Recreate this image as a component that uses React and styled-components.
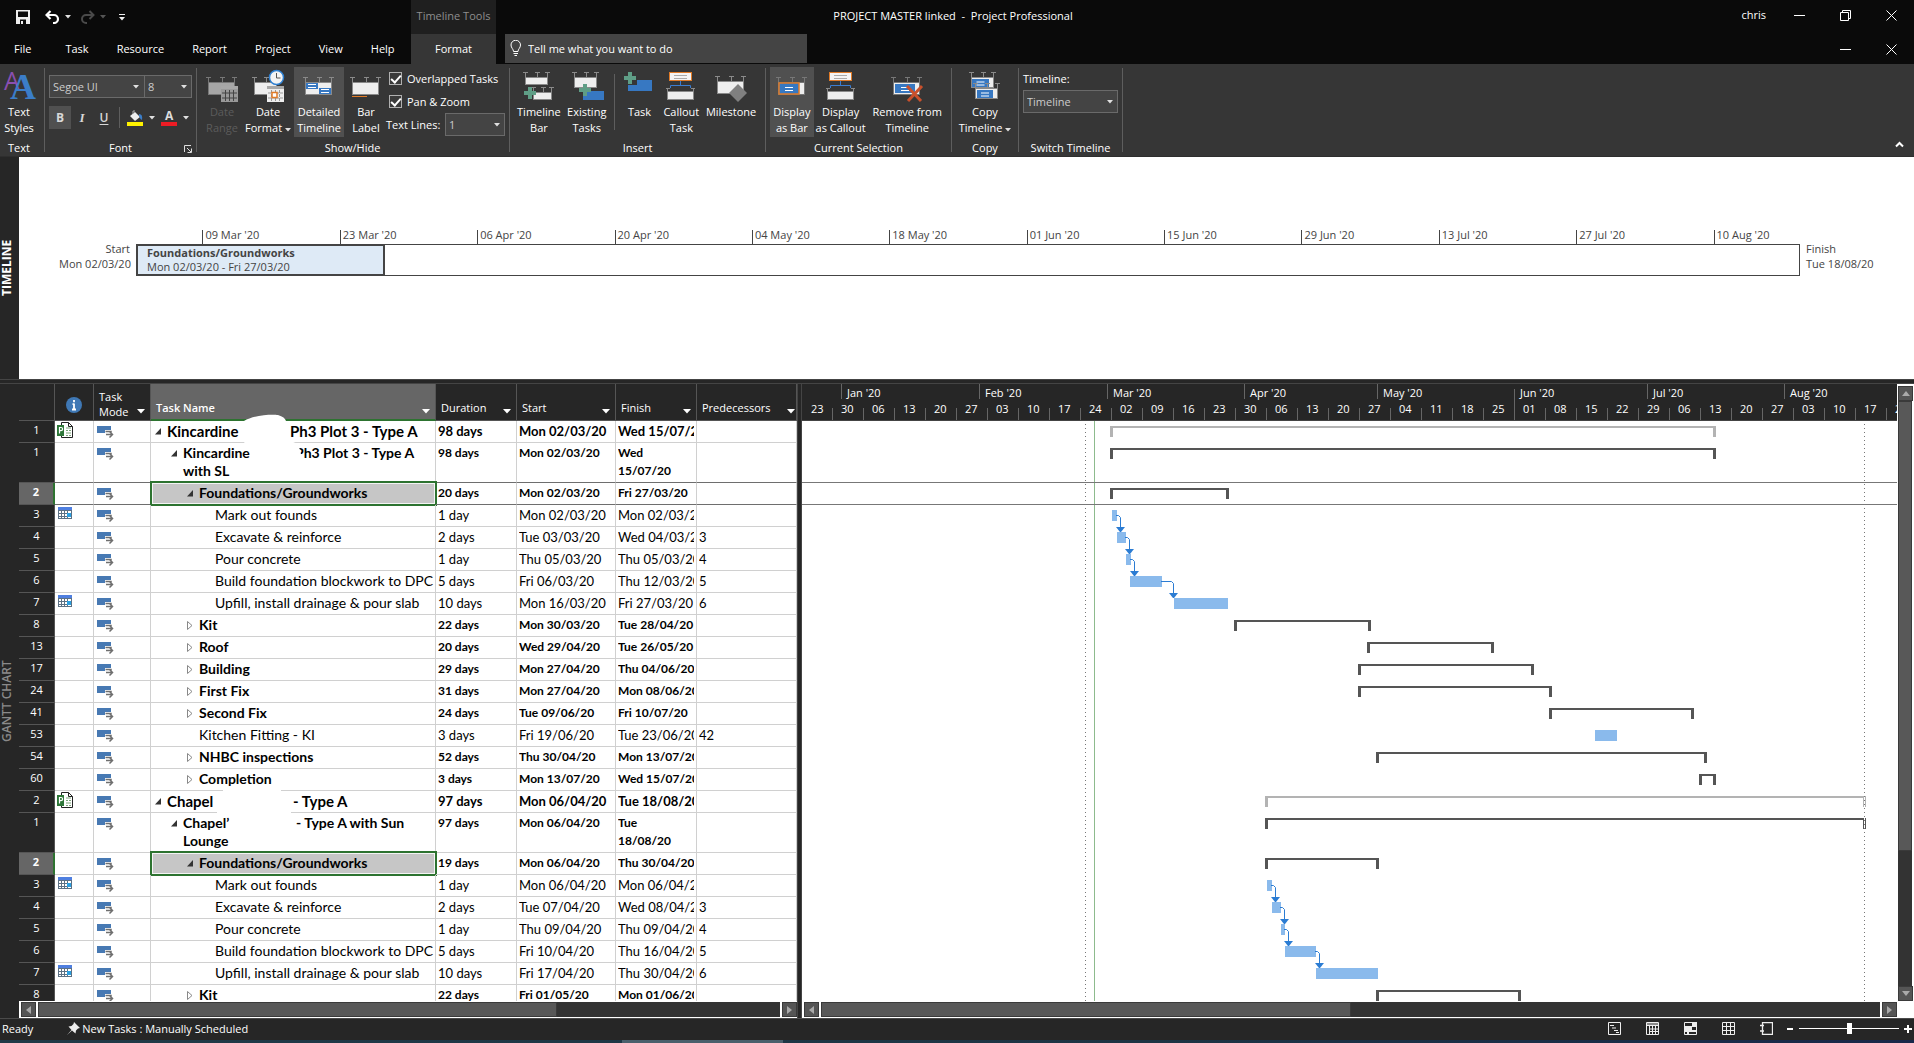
import React from 'react';
import styled, { createGlobalStyle } from 'styled-components';

const ui = `"Open Sans", "Noto Sans", sans-serif`;
const gridFont = `Lato, "Open Sans", sans-serif`;

const Global = createGlobalStyle`
  * { box-sizing: border-box; }
  body { margin: 0; background: #262626; font: 11px/16px ${ui}; color: #fff; }
  button, input, select { font: inherit; color: inherit; margin: 0; }
  button { background: none; border: 0; padding: 0; }
`;

const Window = styled.div`
  height: 100vh;
  display: flex;
  flex-direction: column;
  overflow: hidden;
  white-space: nowrap;
`;

/* ---------- title bar ---------- */
const TopBar = styled.header`
  display: flex;
  height: 34px;
  flex: none;
  background: #0a0a0a;
`;
const QuickAccess = styled.div`
  width: 411px;
  padding-left: 16px;
  display: flex;
  align-items: center;
`;
const QuickButton = styled.button`
  height: 20px;
  display: flex;
  align-items: center;
  justify-content: flex-start;
  width: ${(p) => p.$w}px;
`;
const ToolsCaption = styled.div`
  width: 85px;
  padding-top: 8px;
  text-align: center;
  background: #1f1f1f;
  color: #8e8e8e;
`;
const DocTitle = styled.div`
  flex: 1;
  text-align: center;
  line-height: 32px;
  white-space: pre;
`;
const WindowControls = styled.div`
  width: 504px;
  display: flex;
  justify-content: flex-end;
  align-items: center;
  height: 30px;
`;
const User = styled.span`
  padding-right: 10px;
`;
const ControlButton = styled.button`
  width: 46px;
  height: 30px;
  display: grid;
  place-items: center;
`;

const Tabs = styled.nav`
  display: flex;
  height: 30px;
  flex: none;
  background: #0a0a0a;
`;
const TabList = styled.div`
  width: 411px;
  display: flex;
  align-items: center;
`;
const Tab = styled.button`
  height: 30px;
  padding: 0 ${(p) => p.$end || 14}px 0 14px;
`;
const ActiveTab = styled.button`
  width: 85px;
  background: #363636;
`;
const TellMe = styled.label`
  display: flex;
  align-items: center;
  gap: 6px;
  width: 302px;
  height: 29px;
  margin-left: 9px;
  padding-left: 5px;
  background: #444;
  input {
    flex: 1;
    border: 0;
    padding: 0;
    background: none;
    outline: none;
    &::placeholder { color: #fff; opacity: 1; }
  }
`;
const TabControls = styled.div`
  margin-left: auto;
  display: flex;
`;

/* ---------- ribbon ---------- */
const Ribbon = styled.section`
  display: flex;
  height: 93px;
  flex: none;
  background: #363636;
  border-bottom: 1px solid #2e2e2e;
`;
const Group = styled.div`
  display: flex;
  flex-direction: column;
  width: ${(p) => p.$w}px;
  height: 84px;
  margin-top: 4px;
  padding: 0 ${(p) => p.$end ?? 4}px 0 ${(p) => p.$start ?? 4}px;
  border-right: 1px solid #5e5e5e;
`;
const GroupBody = styled.div`
  display: flex;
  flex: none;
  height: 72px;
`;
const GroupLabel = styled.div`
  display: flex;
  flex: none;
  justify-content: center;
  position: relative;
  line-height: 16px;
  svg { position: absolute; right: 0; top: 5px; }
`;
const BigButton = styled.button`
  display: flex;
  flex-direction: column;
  align-items: center;
  width: ${(p) => p.$w}px;
  height: 70px;
  margin: -1px ${(p) => p.$gap || 0}px 0;
  padding-top: 3px;
  background: ${(p) => (p.$on ? '#505050' : 'none')};
  color: ${(p) => (p.$off ? '#5c5c5c' : '#fff')};
  svg.icon { flex: none; overflow: visible; margin-bottom: 2px; }
`;
const VLine = styled.i`
  width: 1px;
  height: ${(p) => p.$h}px;
  margin: ${(p) => p.$m};
  background: #5e5e5e;
`;
const Stack = styled.div`
  display: flex;
  flex-direction: column;
  padding-top: ${(p) => p.$top || 0}px;
`;
const Checks = styled(Stack)`
  margin-top: -1px;
`;
const SelectRow = styled.div`
  display: flex;
`;
const SelectBox = styled.span`
  position: relative;
  display: flex;
  svg { position: absolute; right: 5px; top: 10px; pointer-events: none; }
`;
const Select = styled.select`
  appearance: none;
  width: ${(p) => p.$w}px;
  height: 23px;
  margin-right: ${(p) => (p.$join ? -1 : 0)}px;
  padding: 0 3px;
  border: 1px solid #6a6a6a;
  border-radius: 0;
  background: #444;
  color: #ccc;
`;
const FormatRow = styled.div`
  display: flex;
  align-items: center;
  height: 23px;
  margin-top: 8px;
`;
const FormatButton = styled.button`
  width: 22px;
  height: 23px;
  display: grid;
  place-items: center;
  background: ${(p) => (p.$on ? '#505050' : 'none')};
  color: #d8d8d8;
  font-size: 12px;
  &.bold { font-weight: 700; }
  &.italic { font: italic 700 13px "Liberation Serif", serif; }
  &.under { font-weight: 600; text-decoration: underline; text-underline-offset: 2px; }
`;
const ColorButton = styled.button`
  display: flex;
  align-items: center;
  gap: 5px;
  width: 34px;
`;
const Check = styled.label`
  display: flex;
  align-items: center;
  gap: 5px;
  height: 23px;
  padding-left: 3px;
  input {
    appearance: none;
    width: 13px;
    height: 13px;
    border: 1px solid #b0b0b0;
    background: #3a3a3a;
    display: grid;
    place-items: center;
  }
  input:checked::after {
    content: '';
    width: 4px;
    height: 8px;
    margin-top: -2px;
    border: solid #fff;
    border-width: 0 2px 2px 0;
    transform: rotate(42deg);
  }
`;
const FieldLabel = styled.label`
  display: flex;
  align-items: center;
  justify-content: space-between;
  gap: 4px;
  width: 119px;
`;
const Collapse = styled.button`
  margin: auto 10px 4px auto;
`;

/* ---------- timeline pane ---------- */
const Pane = styled.section`
  display: flex;
  height: 222px;
  flex: none;
  background: #fff;
  color: #444;
`;
const SideLabel = styled.h2`
  width: 19px;
  flex: none;
  margin: 0;
  padding-left: 5px;
  display: grid;
  place-items: center;
  writing-mode: vertical-rl;
  transform: rotate(180deg);
  background: #262626;
  color: ${(p) => (p.$dim ? '#8a8a8a' : '#fff')};
  font-size: 12px;
  font-weight: ${(p) => (p.$dim ? 600 : 700)};
  line-height: 14px;
`;
const TimelineRow = styled.div`
  flex: 1;
  display: flex;
  align-items: flex-start;
  padding: 87px 37px 0 40px;
`;
const Edge = styled.div`
  width: 71px;
  margin-top: -3px;
  line-height: 15px;
  text-align: ${(p) => p.$align};
`;
const Track = styled.div`
  flex: 1;
  position: relative;
  height: 32px;
  margin: 0 6px;
  border: 1px solid #444;
`;
const Mark = styled.span`
  position: absolute;
  bottom: 31px;
  height: 14px;
  padding-left: 2px;
  border-left: 1px solid #444;
  line-height: 10px;
`;
const TrackTask = styled.div`
  position: absolute;
  left: -1px;
  top: -1px;
  height: 32px;
  padding: 0 9px;
  border: 2px solid #444;
  background: #deeaf6;
  line-height: 14px;
  b { font-weight: 700; }
`;

/* ---------- gantt pane ---------- */
const Splitter = styled.div`
  height: 5px;
  flex: none;
  background: #262626;
  border: solid #444;
  border-width: 1px 0;
`;
const Gantt = styled.main`
  flex: 1;
  min-height: 0;
  display: flex;
`;
const Sheet = styled.div`
  width: 778px;
  flex: none;
  display: flex;
  flex-direction: column;
  background: #fff;
`;
const Scroller = styled.div`
  flex: 1;
  min-height: 0;
  overflow: hidden;
`;
const Table = styled.table`
  width: 778px;
  table-layout: fixed;
  border-collapse: separate;
  border-spacing: 0;
  font: 13px/18px ${gridFont};
  color: #000;
`;
const HeadCell = styled.th`
  height: 37px;
  padding: 0 5px 1px;
  vertical-align: bottom;
  text-align: left;
  background: ${(p) => (p.$on ? '#666' : '#262626')};
  border-right: 1px solid #555;
  border-bottom: ${(p) => (p.$on ? '2px solid #2d7330' : '1px solid #555')};
  color: #fff;
  font: ${(p) => (p.$on ? 600 : 400)} 11px/15px ${ui};
  &:last-child { padding-right: 1px; }
`;
const HeadInner = styled.div`
  display: flex;
  align-items: flex-end;
  justify-content: ${(p) => (p.$center ? 'center' : 'space-between')};
  padding-bottom: ${(p) => p.$up || 0}px;
  button { height: 9px; margin-bottom: ${(p) => (p.$up ? -1 : 3)}px; }
  button svg { display: block; }
`;
const Cell = styled.td`
  position: relative;
  height: 22px;
  padding: 1px 2px 2px;
  vertical-align: top;
  border-right: 1px solid #d0d0d0;
  border-bottom: 1px solid ${(p) => (p.$line ? '#6e6e6e' : '#d0d0d0')};
`;
const Clip = styled.div`
  overflow: hidden;
  font-weight: ${(p) => (p.$bold ? 700 : 400)};
  font-size: ${(p) => (p.$bold && !p.$big ? 12 : 13)}px;
`;
const NumCell = styled.th`
  padding: 0 0 1px;
  vertical-align: top;
  text-align: center;
  font: ${(p) => (p.$on ? 700 : 400)} 11px/18px ${ui};
  color: #fff;
  background: ${(p) => (p.$on ? '#666' : '#262626')};
  border-right: ${(p) => (p.$on ? '2px solid #2d7330' : '1px solid #555')};
  border-bottom: 1px solid #555;
`;
const IconCell = styled(Cell)`
  padding: ${(p) => p.$pad};
  line-height: 0;
`;
const NameText = styled.div`
  position: relative;
  z-index: 1;
  display: flex;
  align-items: flex-start;
  padding-left: ${(p) => p.$level * 16 + 2}px;
  font-weight: ${(p) => (p.$bold ? 700 : 400)};
  font-size: ${(p) => (p.$big ? 15 : 14)}px;
  svg { flex: none; width: 12px; height: 18px; }
`;
const Second = styled.span`
  position: absolute;
  left: ${(p) => p.$left}px;
`;
const Selection = styled.div`
  position: absolute;
  inset: -2px -2px -2px -1px;
  border: 2px solid #2d7330;
  background: #c6c6c6;
  box-shadow: inset 0 0 0 1px #f4f4f4;
`;
const Blob = styled.svg`
  position: absolute;
  left: 66px;
  top: -7px;
  z-index: 2;
  overflow: visible;
`;
const PaneSplit = styled.div`
  width: 5px;
  flex: none;
  background: #262626;
  border: solid #444;
  border-width: 0 1px;
`;
const ChartPane = styled.div`
  flex: 1;
  min-width: 0;
  display: flex;
  background: #fff;
`;
const ChartColumn = styled.div`
  flex: 1;
  min-width: 0;
  display: flex;
  flex-direction: column;
`;
const Scale = styled.svg`
  display: block;
  width: 100%;
  height: 37px;
  flex: none;
  background: #262626;
  font: 11px ${ui};
`;
const Plot = styled.svg`
  display: block;
  width: 100%;
  height: 604px;
`;

/* ---------- scroll bars ---------- */
const HBar = styled.div`
  display: flex;
  height: 17px;
  flex: none;
  gap: 2px;
  padding: 1px 0 1px 2px;
  background: #fff;
`;
const VBar = styled.div`
  display: flex;
  flex-direction: column;
  width: 17px;
  flex: none;
  padding: 2px 2px 17px 1px;
`;
const Rail = styled.div`
  display: flex;
  flex: 1;
  flex-direction: ${(p) => (p.$vertical ? 'column' : 'row')};
  background: #333;
`;
const Arrow = styled.button`
  width: 15px;
  height: 15px;
  flex: none;
  display: grid;
  place-items: center;
  background: #555;
  border: 1px solid #3a3a3a;
`;
const Thumb = styled.div`
  flex: 0 0 ${(p) => p.$size};
  background: #585858;
  border: 1px solid #3a3a3a;
`;

/* ---------- status bar ---------- */
const Status = styled.footer`
  display: flex;
  align-items: center;
  height: 22px;
  flex: none;
  padding: 0 1px 2px 2px;
  border-top: 1px solid #4a4a4a;
`;
const NewTasks = styled.button`
  display: flex;
  align-items: center;
  gap: 2px;
  margin-left: 34px;
`;
const Views = styled.div`
  display: flex;
  margin-left: auto;
`;
const ViewButton = styled.button`
  width: 38px;
  height: 20px;
  display: grid;
  place-items: center;
`;
const Zoom = styled.input`
  appearance: none;
  width: 100px;
  height: 14px;
  margin: 0 4px;
  background: linear-gradient(#fff, #fff) center / 100% 1px no-repeat;
  &::-webkit-slider-thumb {
    appearance: none;
    width: 5px;
    height: 11px;
    background: #fff;
  }
`;
const ZoomButton = styled.button`
  width: 10px;
  height: 14px;
  display: grid;
  place-items: center;
`;
const Desktop = styled.div`
  height: 3px;
  flex: none;
  background: linear-gradient(90deg, #203a48, #1c3444 60%, #18284a);
  i { display: block; width: 161px; height: 3px; margin-left: 622px; background: #4a5f6c; }
`;

/* ---------- glyphs ---------- */
const Caret = ({ dim }) => (
  <svg width="6" height="4" viewBox="0 0 6 4"><path d="M0 0h6L3 3.5z" fill={dim ? '#555' : '#e0e0e0'} /></svg>
);
const SortArrow = () => (
  <svg width="8" height="5" viewBox="0 0 8 5"><path d="M0 0h8L4 4.5z" fill="#fff" /></svg>
);
const Prongs = ({ x, y, w, h = 6, c = '#8a8a8a' }) => (
  <path
    fill="none"
    stroke={c}
    shapeRendering="crispEdges"
    d={`M${x} ${y + 0.5}h5M${x + Math.round(w / 2) - 2} ${y + 0.5}h5M${x + w - 5} ${y + 0.5}h5M${x + 2.5} ${y}v${h}M${x + Math.round(w / 2) + 0.5} ${y}v${h}M${x + w - 2.5} ${y}v${h}`}
  />
);
const Frame = ({ x = 0, y = 7, w = 31, h = 12, fill = '#eee', c = '#8a8a8a' }) => (
  <g>
    <Prongs x={x} y={y} w={w} c={c} />
    <rect x={x + 2.5} y={y + 5.5} width={w - 5} height={h} fill={fill} stroke={c} />
  </g>
);
const Plus = ({ x, y }) => <path d={`M${x + 4} ${y}h4v4h4v4h-4v4h-4v-4h-4v-4h4z`} fill="#5f9e86" />;
const BlueCard = ({ x, y, w, h, stroke = 'none' }) => (
  <g>
    <rect x={x} y={y} width={w} height={h} fill="#3778c2" stroke={stroke} strokeWidth="1.5" />
    <path d={`M${x + w / 2 - 4} ${y + h / 2 - 1}h8M${x + w / 2 - 4} ${y + h / 2 + 2}h8`} stroke="#fff" />
  </g>
);
const Cal = ({ x, y, fill, line, dot }) => (
  <g>
    <rect x={x} y={y} width="17" height="16" fill={fill} />
    <path d={`M${x} ${y + 1.5}h17`} stroke="#a8a8a8" strokeWidth="3" />
    <path d={`M${x + 1} ${y + 7}h15M${x + 1} ${y + 12}h15M${x + 4.5} ${y + 4}v11M${x + 8.5} ${y + 4}v11M${x + 12.5} ${y + 4}v11`} stroke={line} strokeDasharray={dot ? '3 1' : undefined} />
    {dot && <rect x={x + 5} y={y + 6.5} width="5" height="5" fill="#fff" stroke="#e07b28" strokeWidth="1.5" />}
  </g>
);
const Callout = () => (
  <g>
    <rect x="4.500" y="2.500" width="22" height="8" fill="#f4f4f4" stroke="#e07b28" />
    <path d="M9 5.500h13M9 8.500h13" stroke="#aaa" />
    <path d="M15.500 11v4M5.500 18v-2.500h20v2.500" fill="none" stroke="#3b7dd0" />
    <path d="M2.500 18v4M28.500 18v4M1 18.500h4M26 18.500h4" stroke="#8a8a8a" />
    <rect x="2.500" y="21.500" width="26" height="8" fill="#eee" stroke="#8a8a8a" />
  </g>
);

const icons = {
  styles: (
    <g>
      <text x="1" y="20" fontFamily="Open Sans, sans-serif" fontSize="25" fill="#8a4fb0">A</text>
      <text x="7" y="29" fontFamily="Liberation Serif, serif" fontWeight="700" fontSize="36" fill="#3b7dc8">A</text>
    </g>
  ),
  range: (<g><Frame fill="#a6a6a6" c="#777" /><Cal x={15} y={16} fill="#999" line="#444" /></g>),
  format: (
    <g>
      <Frame w={27} />
      <circle cx="24.500" cy="7.500" r="7" fill="#f4f4f4" stroke="#2f80d2" strokeWidth="1.500" />
      <path d="M24.500 3v5h4" fill="none" stroke="#555" />
      <Cal x={15} y={16} fill="#eee" line="#999" dot />
    </g>
  ),
  detailed: (
    <g>
      <Frame />
      <rect x="3" y="13" width="12" height="6" fill="#3778c2" /><path d="M5 14.500h8M5 17.500h8" stroke="#fff" />
      <rect x="16" y="18" width="12" height="6" fill="#3778c2" /><path d="M18 19.500h8M18 22.500h8" stroke="#fff" />
    </g>
  ),
  label: (<g><Frame /><path d="M2 26.500h15" stroke="#e07b28" /></g>),
  tbar: (<g><Frame x={0} y={2} w={27} h={7} /><Frame x={8} y={17} w={23} h={7} /><Plus x={1} y={17} /></g>),
  existing: (<g><Frame x={1} y={2} w={27} h={10} /><rect x="12" y="21" width="21" height="9" fill="#3778c2" /><Plus x={8} y={14} /></g>),
  task: (<g><rect x="4" y="10" width="24" height="11" fill="#3778c2" /><path d="M3 9h10v6H3z" fill="#363636" /><Plus x={0} y={2} /></g>),
  callout: <Callout />,
  milestone: (<g><Frame y={6} /><path d="M23 14l9 9-9 9-9-9z" fill="#808080" /></g>),
  asBar: (<g><Frame c="#777" /><BlueCard x={3} y={13} w={20} h={11} stroke="#e07b28" /></g>),
  remove: (
    <g><Frame c="#777" /><BlueCard x={4} y={14} w={20} h={9} /><path d="M16 16l14 15M31 16L17 31" stroke="#c8502c" strokeWidth="3" /></g>
  ),
  copy: (
    <g>
      <Frame y={2} w={27} h={10} /><BlueCard x={3} y={9} w={17} h={8} />
      <Frame x={4} y={13} w={27} h={10} /><BlueCard x={8} y={20} w={16} h={8} />
    </g>
  ),
};

const Big = ({ icon, a, b, w, on, off, gap, menu }) => (
  <BigButton $w={w} $on={on} $off={off} $gap={gap} disabled={off}>
    <svg className="icon" width="32" height="32" viewBox="0 0 32 32">{icons[icon]}</svg>
    <span>{a}</span>
    <span>{b}{menu && <> <Caret /></>}</span>
  </BigButton>
);

const Choice = ({ w, value, label, join, id }) => (
  <SelectBox>
    <Select id={id} $w={w} $join={join} aria-label={label} defaultValue={value}>
      <option>{value}</option>
    </Select>
    <Caret />
  </SelectBox>
);

const Minimize = () => <svg width="11" height="11"><path d="M0 5.500h11" stroke="#fff" /></svg>;
const Close = () => <svg width="11" height="11"><path d="M.5.500l10 10M10.500.500l-10 10" stroke="#fff" /></svg>;

/* ---------- data ---------- */
const K = 'sum';
const rows = [
  { n: 1, lv: 0, kind: 'project', name: 'Kincardine', rest: 'Ph3 Plot 3 - Type A', at: 139, dur: '98 days', s: 'Mon 02/03/20', f: 'Wed 15/07/20', icon: 'project', open: true, blob: 1 },
  { n: 1, lv: 1, kind: K, name: 'Kincardine', rest: 'Ph3 Plot 3 - Type A', at: 144, line2: 'with SL', dur: '98 days', s: 'Mon 02/03/20', f: 'Wed 15/07/20', open: true, line: true },
  { n: 2, lv: 2, kind: K, name: 'Foundations/Groundworks', dur: '20 days', s: 'Mon 02/03/20', f: 'Fri 27/03/20', open: true, sel: true, line: true },
  { n: 3, lv: 3, name: 'Mark out founds', dur: '1 day', s: 'Mon 02/03/20', f: 'Mon 02/03/20', icon: 'cal' },
  { n: 4, lv: 3, name: 'Excavate & reinforce', dur: '2 days', s: 'Tue 03/03/20', f: 'Wed 04/03/20', p: '3' },
  { n: 5, lv: 3, name: 'Pour concrete', dur: '1 day', s: 'Thu 05/03/20', f: 'Thu 05/03/20', p: '4' },
  { n: 6, lv: 3, name: 'Build foundation blockwork to DPC', dur: '5 days', s: 'Fri 06/03/20', f: 'Thu 12/03/20', p: '5' },
  { n: 7, lv: 3, name: 'Upfill, install drainage & pour slab', dur: '10 days', s: 'Mon 16/03/20', f: 'Fri 27/03/20', p: '6', icon: 'cal' },
  { n: 8, lv: 2, kind: K, name: 'Kit', dur: '22 days', s: 'Mon 30/03/20', f: 'Tue 28/04/20' },
  { n: 13, lv: 2, kind: K, name: 'Roof', dur: '20 days', s: 'Wed 29/04/20', f: 'Tue 26/05/20' },
  { n: 17, lv: 2, kind: K, name: 'Building', dur: '29 days', s: 'Mon 27/04/20', f: 'Thu 04/06/20' },
  { n: 24, lv: 2, kind: K, name: 'First Fix', dur: '31 days', s: 'Mon 27/04/20', f: 'Mon 08/06/20' },
  { n: 41, lv: 2, kind: K, name: 'Second Fix', dur: '24 days', s: 'Tue 09/06/20', f: 'Fri 10/07/20' },
  { n: 53, lv: 2, name: 'Kitchen Fitting - KI', dur: '3 days', s: 'Fri 19/06/20', f: 'Tue 23/06/20', p: '42', free: true },
  { n: 54, lv: 2, kind: K, name: 'NHBC inspections', dur: '52 days', s: 'Thu 30/04/20', from: '01/05/20', f: 'Mon 13/07/20' },
  { n: 60, lv: 2, kind: K, name: 'Completion', dur: '3 days', s: 'Mon 13/07/20', f: 'Wed 15/07/20' },
  { n: 2, lv: 0, kind: 'project', name: 'Chapel', rest: '- Type A', at: 142, dur: '97 days', s: 'Mon 06/04/20', f: 'Tue 18/08/20', icon: 'project', open: true, blob: 2 },
  { n: 1, lv: 1, kind: K, name: 'Chapel’', rest: '- Type A with Sun', at: 145, line2: 'Lounge', dur: '97 days', s: 'Mon 06/04/20', f: 'Tue 18/08/20', open: true },
  { n: 2, lv: 2, kind: K, name: 'Foundations/Groundworks', dur: '19 days', s: 'Mon 06/04/20', f: 'Thu 30/04/20', open: true, sel: true },
  { n: 3, lv: 3, name: 'Mark out founds', dur: '1 day', s: 'Mon 06/04/20', f: 'Mon 06/04/20', icon: 'cal' },
  { n: 4, lv: 3, name: 'Excavate & reinforce', dur: '2 days', s: 'Tue 07/04/20', f: 'Wed 08/04/20', p: '3' },
  { n: 5, lv: 3, name: 'Pour concrete', dur: '1 day', s: 'Thu 09/04/20', f: 'Thu 09/04/20', p: '4' },
  { n: 6, lv: 3, name: 'Build foundation blockwork to DPC', dur: '5 days', s: 'Fri 10/04/20', f: 'Thu 16/04/20', p: '5' },
  { n: 7, lv: 3, name: 'Upfill, install drainage & pour slab', dur: '10 days', s: 'Fri 17/04/20', f: 'Thu 30/04/20', p: '6', icon: 'cal' },
  { n: 8, lv: 2, kind: K, name: 'Kit', dur: '22 days', s: 'Fri 01/05/20', f: 'Mon 01/06/20' },
];
let nextTop = 0;
rows.forEach((r) => {
  r.h = r.line2 ? 40 : 22;
  r.top = nextTop;
  nextTop += r.h;
});

const DAY = 86400000;
const ORIGIN = Date.UTC(2019, 11, 23);
const PX = 4.426;
const dayOf = (text) => {
  const [d, m, y] = text.split(' ').pop().split('/').map(Number);
  return (Date.UTC(2000 + y, m - 1, d) - ORIGIN) / DAY;
};
const startX = (text) => Math.floor(1.1 + dayOf(text) * PX);
const endX = (text) => Math.round(1 + (dayOf(text) + 1) * PX);
const tickOf = (day) => Math.round(day * PX - 0.5);
const months = ['Jan', 'Feb', 'Mar', 'Apr', 'May', 'Jun', 'Jul', 'Aug'].map((name, m) => ({
  name: `${name} '20`,
  day: (Date.UTC(2020, m, 1) - ORIGIN) / DAY,
}));
const weeks = Array.from({ length: 36 }, (_, i) => ({
  day: i * 7,
  text: String(new Date(ORIGIN + i * 7 * DAY).getUTCDate()).padStart(2, '0'),
}));

const marks = ['09 Mar', '23 Mar', '06 Apr', '20 Apr', '04 May', '18 May', '01 Jun', '15 Jun', '29 Jun', '13 Jul', '27 Jul', '10 Aug'];
const SPAN = 169.375;

const ModeIcon = () => (
  <svg width="17" height="13" viewBox="0 0 17 13">
    <path d="M0 0h14v4H8v3H0z" fill="#4779b3" />
    <path d="M8.500 5.500H14v2M9 8.500h6M12.500 5.500l3 3-3 3" fill="none" stroke="#6f6f6f" strokeWidth="1.500" />
  </svg>
);
const ProjectIcon = () => (
  <svg width="17" height="17" viewBox="0 0 17 17">
    <path d="M4.500.500h7l4 4v11h-11z" fill="#fff" stroke="#222" />
    <path d="M11.500.500v4h4" fill="none" stroke="#222" />
    <path d="M9 6h5M9 8.500h2M12 8.500h2M9 11h5M9 13.500h2M12 13.500h2" stroke="#7aa67a" strokeWidth="1.200" />
    <rect x="0" y="3" width="7" height="11" fill="#2d7738" />
    <path d="M2.500 11.500v-6H4a1.600 1.600 0 010 3.200H2.500" fill="none" stroke="#fff" strokeWidth="1.200" />
  </svg>
);
const CalendarIcon = () => (
  <svg width="14" height="12" viewBox="0 0 14 12" shapeRendering="crispEdges">
    <rect width="14" height="12" fill="#5c7184" />
    <rect width="14" height="3" fill="#4f7fe0" />
    <path d="M1 4h2v2H1zM4 4h2v2H4zM7 4h2v2H7zM10 4h3v2h-3zM1 7h2v2H1zM4 7h2v2H4zM7 7h2v2H7zM1 10h2v1H1zM4 10h2v1H4zM7 10h2v1H7zM10 10h3v1h-3z" fill="#fff" />
    <rect x="9" y="6" width="4" height="4" fill="#2b9fe0" />
  </svg>
);
const Toggle = ({ open }) => (
  <svg viewBox="0 0 12 18">
    {open ? <path d="M6 6v6.500H0z" fill="#333" /> : <path d="M.500 5.500v8l4.500-4z" fill="#fff" stroke="#888" />}
  </svg>
);

const Bar = ({ r }) => {
  const x0 = startX(r.from || r.s);
  const x1 = endX(r.f);
  const y = r.top + 5;
  if (!r.kind) return <rect x={x0} y={y} width={x1 - x0} height="11" fill="#8abaec" />;
  return (
    <path
      d={`M${x0 - 2} ${y}H${x1 + 1}V${y + 11}h-3v-9H${x0 + 1}v9h-3z`}
      fill={r.kind === 'project' ? '#b3b3b3' : '#555'}
    />
  );
};
const Link = ({ from, to }) => {
  const a = endX(from.f);
  const b = Math.max(a + 3, startX(to.s) - 1);
  const y = from.top + 10;
  const end = to.top + 5;
  return (
    <g>
      <path d={`M${a - 1} ${y + 0.5}H${b - 1.5}l2 2V${end}`} fill="none" stroke="#2b7cd3" />
      <path d={`M${b - 4} ${end - 5}h9l-4 5h-1z`} fill="#2b7cd3" />
    </g>
  );
};

const LeftArrow = () => <Arrow aria-label="Scroll left"><svg width="5" height="8"><path d="M5 0v8L0 4z" fill="#aaa" /></svg></Arrow>;
const RightArrow = () => <Arrow aria-label="Scroll right"><svg width="5" height="8"><path d="M0 0v8l5-4z" fill="#aaa" /></svg></Arrow>;

function GanttChart() {
  const selected = rows[2];
  return (
    <ChartColumn>
      <Scale role="img" aria-label="Timescale">
        <g stroke="#666" shapeRendering="crispEdges">
          {months.map((m) => <path key={m.name} d={`M${tickOf(m.day) + 0.5} ${m.day % 7 ? 0 : 5}V${m.day % 7 ? 15 : 37}`} />)}
          {weeks.slice(1).map((w) => <path key={w.day} d={`M${tickOf(w.day) + 0.5} 24V37`} />)}
          <path d="M0 36.500H4000" stroke="#444" />
        </g>
        <g fill="#fff">
          {months.map((m) => <text key={m.name} x={tickOf(m.day) + 6} y="13">{m.name}</text>)}
          {weeks.map((w) => <text key={w.day} x={tickOf(w.day) + 9} y="29">{w.text}</text>)}
        </g>
      </Scale>
      <Scroller>
        <Plot role="img" aria-label="Gantt chart">
          <g shapeRendering="crispEdges">
            {rows.map((r, i) => <Bar key={i} r={r} />)}
            <path d="M1062.500 0V604" stroke="#fff" />
            <path d="M283.500 3V604M1062.500 3V604" stroke="#777" strokeDasharray="1 3" />
            <path d="M292.500 0V604" stroke="#8dbb8d" />
            <path d={`M0 ${selected.top - 0.5}H4000M0 ${selected.top + 21.5}H4000`} stroke="#777" />
          </g>
          {rows.map((r, i) => r.p && !r.free && <Link key={i} from={rows[i - 1]} to={r} />)}
        </Plot>
      </Scroller>
      <HBar>
        <LeftArrow />
        <Rail><Thumb $size="50%" /></Rail>
        <RightArrow />
      </HBar>
    </ChartColumn>
  );
}

const widths = [36, 39, 57, 285, 81, 99, 81, 100];
const Head = ({ children, on, up }) => (
  <HeadCell scope="col" $on={on}>
    <HeadInner $up={on ? 3 : up}>
      <span>{children}</span>
      <button aria-label={`Filter ${typeof children === 'string' ? children : 'Task Mode'}`}><SortArrow /></button>
    </HeadInner>
  </HeadCell>
);
const FinishDate = ({ r }) => {
  if (!r.line2) return r.f;
  const [weekday, date] = r.f.split(' ');
  return <>{weekday}<br />{date}</>;
};

function TaskSheet() {
  return (
    <Sheet>
      <Scroller>
        <Table>
          <colgroup>{widths.map((w, i) => <col key={i} width={w} />)}</colgroup>
          <thead>
            <tr>
              <HeadCell aria-label="Row number" />
              <HeadCell scope="col" aria-label="Indicators">
                <HeadInner $center $up={6}>
                  <svg width="16" height="16"><circle cx="8" cy="8" r="8" fill="#3f78b5" /><path d="M8 3v2.300M8 6.500v6M6.500 7.200h1.500M6 12.500h4" stroke="#fff" strokeWidth="1.800" /></svg>
                </HeadInner>
              </HeadCell>
              <Head>Task<br />Mode</Head>
              <Head on>Task Name</Head>
              <Head up={4}>Duration</Head>
              <Head up={4}>Start</Head>
              <Head up={4}>Finish</Head>
              <Head up={4}>Predecessors</Head>
            </tr>
          </thead>
          <tbody>
            {rows.map((r, i) => {
              const bold = !!r.kind;
              const big = r.kind === 'project';
              const text = { $bold: bold, $big: big };
              return (
                <tr key={i}>
                  <NumCell scope="row" $on={r.sel}>{r.n}</NumCell>
                  <IconCell $line={r.line} $pad={r.icon === 'project' ? '1px 0 0 2px' : '2px 0 0 3px'}>
                    {r.icon === 'project' && <ProjectIcon />}
                    {r.icon === 'cal' && <CalendarIcon />}
                  </IconCell>
                  <IconCell $line={r.line} $pad="5px 0 0 3px"><ModeIcon /></IconCell>
                  <Cell $line={r.line}>
                    {r.sel && <Selection />}
                    <NameText $bold={bold} $big={big} $level={r.lv}>
                      {bold ? <Toggle open={r.open} /> : <svg />}
                      <span>{r.name}{r.line2 && <><br />{r.line2}</>}</span>
                      {r.rest && <Second $left={r.at - 2}>{r.rest}</Second>}
                    </NameText>
                    {r.blob === 1 && (
                      <Blob width="90" height="46">
                        <path d="M27 7C36 1 55 0 61 1Q68 3 69 7L72 27Q80 28 82 33Q85 40 84 46L45 46Q34 40 27 28Z" fill="#fff" />
                      </Blob>
                    )}
                    {r.blob === 2 && <Blob width="90" height="46"><path d="M6 4H64V12H74V30H0V24L6 12Z" fill="#fff" /></Blob>}
                  </Cell>
                  <Cell $line={r.line}><Clip {...text}>{r.dur}</Clip></Cell>
                  <Cell $line={r.line}><Clip {...text}>{r.s}</Clip></Cell>
                  <Cell $line={r.line}><Clip {...text}><FinishDate r={r} /></Clip></Cell>
                  <Cell $line={r.line}><Clip {...text}>{r.p}</Clip></Cell>
                </tr>
              );
            })}
          </tbody>
        </Table>
      </Scroller>
      <HBar>
        <LeftArrow />
        <Rail><Thumb $size="70%" /></Rail>
        <RightArrow />
      </HBar>
    </Sheet>
  );
}

const viewIcons = {
  'Gantt Chart': <path d="M.500.500h12v12H.500zM2 3.500h4M4 6h4M6 8.500h4M8 10.500h3" fill="none" stroke="#eee" />,
  'Task Usage': <path d="M.500.500h12v12H.500zM0 2h13M0 3.500h13M3.500 4v8M6.500 4v8M9.500 4v8M3 7h9M3 9.500h9" fill="none" stroke="#eee" />,
  'Team Planner': (
    <g><path d="M.500.500h12v12H.500z" fill="none" stroke="#eee" /><path d="M8 0h5v5H8zM0 4h8v5H0zM3 9h2v4H3zM0 8h13v2H0z" fill="#eee" /></g>
  ),
  'Resource Sheet': <path d="M.500.500h12v12H.500zM4.500 0v13M8.500 0v13M0 4.500h13M0 8.500h13" fill="none" stroke="#eee" />,
  Report: <path d="M2.500.500h10v12h-10zM0 3.500h4M0 9h4" fill="none" stroke="#eee" strokeWidth="1.300" />,
};

export default function App() {
  return (
    <Window>
      <Global />
      <TopBar>
        <QuickAccess>
          <QuickButton $w={29} aria-label="Save">
            <svg width="14" height="14"><path d="M0 0h14v14H0z" fill="#eee" /><path d="M2 1.500h10v5.500H2zM4 9.500h6V14H4z" fill="#0a0a0a" /><rect x="5" y="11" width="2" height="3" fill="#eee" /></svg>
          </QuickButton>
          <QuickButton $w={20} aria-label="Undo">
            <svg width="15" height="14"><path d="M5.500 1L1.500 5l4 4M1.500 5h7.500a4 4 0 010 8H8" fill="none" stroke="#fff" strokeWidth="2.200" /></svg>
          </QuickButton>
          <QuickButton $w={15} aria-label="Undo history"><Caret /></QuickButton>
          <QuickButton $w={20} aria-label="Redo">
            <svg width="15" height="14"><path d="M9.500 1l4 4-4 4M13.500 5H6a4 4 0 000 8h1" fill="none" stroke="#4a4a4a" strokeWidth="2" /></svg>
          </QuickButton>
          <QuickButton $w={19} aria-label="Redo history"><Caret dim /></QuickButton>
          <QuickButton $w={10} aria-label="Customize toolbar">
            <svg width="6" height="7"><path d="M0 .500h6" stroke="#eee" /><path d="M0 3h6L3 6.500z" fill="#eee" /></svg>
          </QuickButton>
        </QuickAccess>
        <ToolsCaption>Timeline Tools</ToolsCaption>
        <DocTitle>{'PROJECT MASTER linked  -  Project Professional'}</DocTitle>
        <WindowControls>
          <User>chris</User>
          <ControlButton aria-label="Minimize"><Minimize /></ControlButton>
          <ControlButton aria-label="Restore">
            <svg width="11" height="11"><path d="M.500 2.500h8v8h-8zM2.500 2.500v-2h8v8h-2" fill="none" stroke="#fff" /></svg>
          </ControlButton>
          <ControlButton aria-label="Close"><Close /></ControlButton>
        </WindowControls>
      </TopBar>
      <Tabs>
        <TabList>
          <Tab $end={20}>File</Tab>
          {['Task', 'Resource', 'Report', 'Project', 'View', 'Help'].map((t) => <Tab key={t}>{t}</Tab>)}
        </TabList>
        <ActiveTab>Format</ActiveTab>
        <TellMe>
          <svg width="12" height="17" viewBox="0 0 12 17"><path d="M3.500 11.500C3.500 9 1 8 1 5a4.700 4.700 0 019.500 0c0 3-2.500 4-2.500 6.500zM3.500 13.500h4.500M4.500 15.500h2.500" fill="none" stroke="#fff" /></svg>
          <input aria-label="Tell me what you want to do" placeholder="Tell me what you want to do" />
        </TellMe>
        <TabControls>
          <ControlButton aria-label="Minimize document"><Minimize /></ControlButton>
          <ControlButton aria-label="Close document"><Close /></ControlButton>
        </TabControls>
      </Tabs>

      <Ribbon>
        <Group $w={45} $start={0} $end={6}>
          <GroupBody><Big icon="styles" a="Text" b="Styles" w={38} /></GroupBody>
          <GroupLabel>Text</GroupLabel>
        </Group>
        <Group $w={152}>
          <GroupBody>
            <Stack $top={7}>
              <SelectRow>
                <Choice w={96} value="Segoe UI" label="Font" join />
                <Choice w={48} value="8" label="Font size" />
              </SelectRow>
              <FormatRow>
                <FormatButton $on className="bold">B</FormatButton>
                <FormatButton className="italic">I</FormatButton>
                <FormatButton className="under">U</FormatButton>
                <VLine $h={21} $m="0 7px 0 4px" />
                <ColorButton aria-label="Background colour">
                  <svg width="17" height="16"><path d="M3 6l5-4 5 5-5 4z" fill="#eee" /><path d="M6 4V1h2" stroke="#aaa" fill="none" /><path d="M12 4q4 0 3 6-2-1-3-4z" fill="#3b7dc8" /><rect y="12" width="16" height="4" fill="#fff200" /></svg>
                  <Caret />
                </ColorButton>
                <ColorButton aria-label="Font colour">
                  <svg width="17" height="16"><text x="4" y="10" fontSize="12" fontWeight="700" fill="#ddd">A</text><rect y="12" width="16" height="4" fill="#ed1c24" /></svg>
                  <Caret />
                </ColorButton>
              </FormatRow>
            </Stack>
          </GroupBody>
          <GroupLabel>
            Font
            <svg width="8" height="8"><path d="M.500 7V.500H7M3 3l4 4M7.500 3.500v4h-4" fill="none" stroke="#ddd" /></svg>
          </GroupLabel>
        </Group>
        <Group $w={313} $start={3}>
          <GroupBody>
            <Big icon="range" a="Date" b="Range" w={44} off />
            <Big icon="format" a="Date" b="Format" w={48} menu />
            <Big icon="detailed" a="Detailed" b="Timeline" w={50} on gap={2} />
            <Big icon="label" a="Bar" b="Label" w={40} />
            <Checks>
              <Check><input type="checkbox" defaultChecked />Overlapped Tasks</Check>
              <Check><input type="checkbox" defaultChecked />Pan &amp; Zoom</Check>
              <FieldLabel htmlFor="lines">Text Lines:<Choice id="lines" w={60} value="1" /></FieldLabel>
            </Checks>
          </GroupBody>
          <GroupLabel>Show/Hide</GroupLabel>
        </Group>
        <Group $w={256}>
          <GroupBody>
            <Big icon="tbar" a="Timeline" b="Bar" w={50} />
            <Big icon="existing" a="Existing" b="Tasks" w={46} />
            <VLine $h={56} $m="6px 3px 0 4px" />
            <Big icon="task" a="Task" b="" w={44} />
            <Big icon="callout" a="Callout" b="Task" w={40} />
            <Big icon="milestone" a="Milestone" b="" w={60} />
          </GroupBody>
          <GroupLabel>Insert</GroupLabel>
        </Group>
        <Group $w={186}>
          <GroupBody>
            <Big icon="asBar" a="Display" b="as Bar" w={44} on />
            <Big icon="callout" a="Display" b="as Callout" w={54} />
            <Big icon="remove" a="Remove from" b="Timeline" w={80} />
          </GroupBody>
          <GroupLabel>Current Selection</GroupLabel>
        </Group>
        <Group $w={67}>
          <GroupBody><Big icon="copy" a="Copy" b="Timeline" w={58} menu /></GroupBody>
          <GroupLabel>Copy</GroupLabel>
        </Group>
        <Group $w={104}>
          <GroupBody>
            <Stack $top={3}>
              <label htmlFor="timeline">Timeline:</label>
              <Stack $top={3}><Choice id="timeline" w={95} value="Timeline" /></Stack>
            </Stack>
          </GroupBody>
          <GroupLabel>Switch Timeline</GroupLabel>
        </Group>
        <Collapse aria-label="Collapse the ribbon"><svg width="9" height="7"><path d="M1 5.500l3.500-3.500L8 5.500" fill="none" stroke="#fff" strokeWidth="2" /></svg></Collapse>
      </Ribbon>

      <Pane>
        <SideLabel>TIMELINE</SideLabel>
        <TimelineRow>
          <Edge $align="right">Start<br />Mon 02/03/20</Edge>
          <Track>
            {marks.map((m, i) => (
              <Mark key={m} style={{ left: `${((6.67 + i * 14) / SPAN) * 100}%` }}>{m} '20</Mark>
            ))}
            <TrackTask style={{ width: `${(25.375 / SPAN) * 100}%` }}>
              <b>Foundations/Groundworks</b><br />Mon 02/03/20 - Fri 27/03/20
            </TrackTask>
          </Track>
          <Edge $align="left">Finish<br />Tue 18/08/20</Edge>
        </TimelineRow>
      </Pane>
      <Splitter />
      <Gantt>
        <SideLabel $dim>GANTT CHART</SideLabel>
        <TaskSheet />
        <PaneSplit />
        <ChartPane>
          <GanttChart />
          <VBar>
            <Arrow aria-label="Scroll up"><svg width="8" height="5"><path d="M0 5h8L4 0z" fill="#aaa" /></svg></Arrow>
            <Rail $vertical><Thumb $size="77%" /></Rail>
            <Arrow aria-label="Scroll down"><svg width="8" height="5"><path d="M0 0h8L4 5z" fill="#aaa" /></svg></Arrow>
          </VBar>
        </ChartPane>
      </Gantt>
      <Status>
        <span>Ready</span>
        <NewTasks>
          <svg width="13" height="13"><path d="M7 0l6 6-2 .500-2 2-.500 3L5 8.500 0 13l4.500-5L1.500 4.500l3-.500 2-2z" fill="#eee" /></svg>
          New Tasks : Manually Scheduled
        </NewTasks>
        <Views>
          {Object.entries(viewIcons).map(([name, art]) => (
            <ViewButton key={name} aria-label={name}><svg width="13" height="13">{art}</svg></ViewButton>
          ))}
        </Views>
        <ZoomButton aria-label="Zoom out"><svg width="6" height="2"><path d="M0 1h6" stroke="#fff" strokeWidth="2" /></svg></ZoomButton>
        <Zoom type="range" aria-label="Zoom" defaultValue="50" />
        <ZoomButton aria-label="Zoom in"><svg width="8" height="8"><path d="M0 4h8M4 0v8" stroke="#fff" strokeWidth="2" /></svg></ZoomButton>
      </Status>
      <Desktop><i /></Desktop>
    </Window>
  );
}
